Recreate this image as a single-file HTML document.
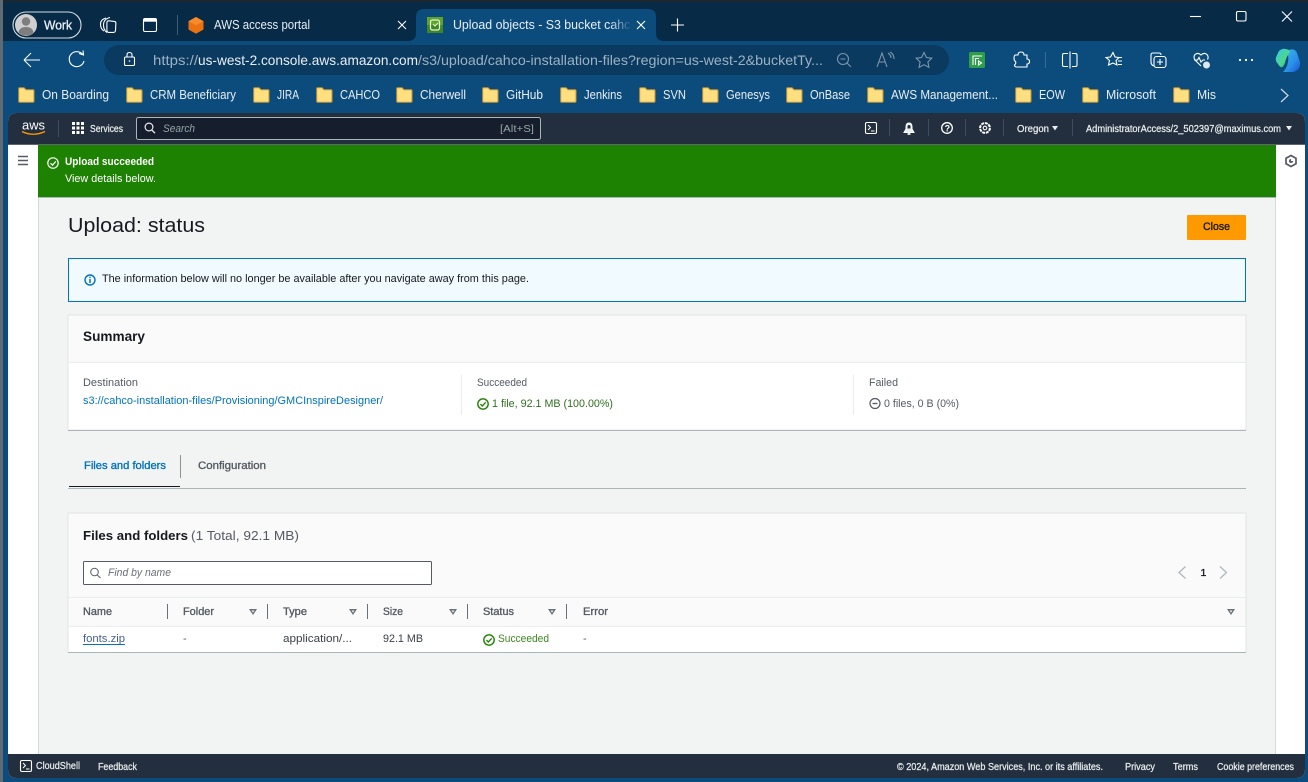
<!DOCTYPE html>
<html><head><meta charset="utf-8"><title>Upload objects - S3 bucket</title>
<style>
html,body{margin:0;padding:0;background:#0c4c7c;width:1308px;height:782px;overflow:hidden}
svg{display:block;font-family:"Liberation Sans",sans-serif}
.c{fill:#e8eef4;font-size:13px}
.nb{fill:#eaeded;font-size:10.5px;stroke:#eaeded;stroke-width:.25px}
.g{fill:#545b64;font-size:11px}
.d{fill:#16191f;font-size:11px}
.b{fill:#16191f;font-size:11px;stroke:#16191f;stroke-width:.35px}
.l{fill:#0073bb;font-size:11px}
.t{fill:#545b64;font-size:11px;stroke:#545b64;stroke-width:.35px}
.s{fill:none;stroke:#fff;stroke-width:1.1}
.h{fill:none;stroke:#545b64;stroke-width:1}
</style></head><body>
<svg width="1308" height="782" viewBox="0 0 1308 782" xmlns="http://www.w3.org/2000/svg">
<defs>
<g id="f"><path d="M0.7 3.5V1.5Q0.7 .7 1.5 .7H6L8 2.7H15Q16 2.7 16 3.7V14.3Q16 15.2 15 15.2H1.6Q.7 15.2 .7 14.3Z" fill="#ffdf80" stroke="#c8962e" stroke-width="1"/></g>
<g id="ck"><circle cx="6" cy="6" r="5.2" fill="none" stroke="#1d8102" stroke-width="1.4"/><path d="M3.4 6.1L5.3 8L8.7 4.3" fill="none" stroke="#1d8102" stroke-width="1.3"/></g>
<g id="tri"><path d="M0 0H8L4 6Z" fill="#687078"/><path d="M2.6 1.5H5.4L4 3.6Z" fill="#fafafa"/></g>
<linearGradient id="fade" x1="0" x2="1" y1="0" y2="0"><stop offset="0" stop-color="#0c4c7c" stop-opacity="0"/><stop offset="1" stop-color="#0c4c7c"/></linearGradient>
<linearGradient id="cp" x1="0" x2="1" y1="0" y2="1"><stop offset="0" stop-color="#3ab8ee"/><stop offset=".6" stop-color="#2a8fe8"/><stop offset="1" stop-color="#1b4fd8"/></linearGradient>
<linearGradient id="cp2" x1="0" x2="1" y1="0" y2="1"><stop offset="0" stop-color="#35c8e8"/><stop offset=".6" stop-color="#4fd68a"/><stop offset="1" stop-color="#1f9aa8"/></linearGradient>
</defs>

<!-- window -->
<rect width="1308" height="782" fill="#0c4c7c"/>
<rect width="1308" height="41" fill="#072a47"/>
<rect width="1308" height="2" fill="#1c2730"/>
<rect x="0" y="0" width="3" height="782" fill="#5f6a72"/>

<!-- tab strip -->
<rect x="13" y="12" width="68" height="26" rx="13" fill="none" stroke="#d5dde3" stroke-width="1.1"/>
<circle cx="26" cy="25" r="11" fill="#cfcfcf"/>
<circle cx="26" cy="21.5" r="4.2" fill="#7e7e7e"/>
<path d="M18.5 32.5Q19.5 27 26 27Q32.5 27 33.5 32.5Q30.5 35.5 26 35.5Q21.5 35.5 18.5 32.5Z" fill="#7e7e7e"/>
<text x="44" y="29.5" class="c" textLength="28" lengthAdjust="spacingAndGlyphs" style="font-size:13px;stroke:#e8eef4;stroke-width:.3px">Work</text>
<g class="s"><path d="M106 18Q100.5 19.5 100.5 24Q100.5 29 104 31"/><path d="M110 17.5Q103.5 19 103.5 25Q103.5 30 107 32.5"/><path d="M109 20.8L114.3 21.4Q116 21.6 115.9 23.3L115.5 30.5Q115.3 32.4 113.4 32.4H108.9Q106.9 32.4 106.9 30.4V23Q106.9 20.6 109 20.8Z"/></g>
<rect x="143.5" y="18.5" width="13" height="13" rx="1.5" class="s"/><rect x="143.5" y="18.5" width="13" height="3.2" fill="#fff"/>
<rect x="177" y="15" width="1" height="20" fill="#3a5b76"/>
<path d="M196 17L203.5 21.2V29.5L196 33.7L188.5 29.5V21.2Z" fill="#ec7211"/><path d="M196 17L203.5 21.2L196 25.3L188.5 21.2Z" fill="#f58b2d"/>
<text x="214" y="29" class="c" textLength="96" lengthAdjust="spacingAndGlyphs">AWS access portal</text>
<path d="M398 21L406 29M406 21L398 29" class="s"/>
<path d="M408 41Q416 41 416 33V17Q416 9 424 9H648Q656 9 656 17V33Q656 41 664 41Z" fill="#0c4c7c"/>
<rect x="427" y="17" width="16" height="16" fill="#3f8624"/><rect x="427" y="17" width="16" height="8" fill="#5ea42c"/>
<rect x="430.5" y="20" width="9" height="10" rx="2" fill="none" stroke="#e5f3da" stroke-width="1.2"/><path d="M433 24L435 26L438 23" fill="none" stroke="#e5f3da"/>
<text x="453" y="29" class="c" textLength="191" lengthAdjust="spacingAndGlyphs">Upload objects - S3 bucket cahco-i</text>
<rect x="610" y="14" width="22" height="22" fill="url(#fade)"/><rect x="630" y="14" width="20" height="22" fill="#0c4c7c"/>
<path d="M637 21L645 29M645 21L637 29" class="s"/>
<path d="M671 25H684M677.5 18.5V31.5" class="s"/>
<!-- window controls -->
<path d="M1190 16.5H1201" class="s"/>
<rect x="1236.5" y="11.5" width="9.5" height="9.5" rx="1.5" class="s"/>
<path d="M1282 11.5L1292 21.5M1292 11.5L1282 21.5" class="s"/>

<!-- toolbar -->
<path d="M24 60H40M24 60L31 53M24 60L31 67" fill="none" stroke="#fff" stroke-width="1"/>
<path d="M83 55A7.5 7.5 0 1 0 84 61M79 53.5L83.5 55L83 50.5" class="s"/>
<rect x="104" y="45" width="845" height="30" rx="15" fill="#0a3a60"/>
<rect x="124.5" y="57" width="10" height="8.5" rx="1.3" class="s"/><path d="M127 57V55Q127 52.5 129.5 52.5Q132 52.5 132 55V57" class="s"/><circle cx="129.5" cy="61" r=".8" fill="#fff"/>
<text y="65" x="153" fill="#9db1c2" style="font-size:14px" textLength="45" lengthAdjust="spacingAndGlyphs">https://</text>
<text y="65" x="198" fill="#e8eef4" style="font-size:14px" textLength="220" lengthAdjust="spacingAndGlyphs">us-west-2.console.aws.amazon.com</text>
<text y="65" x="418" fill="#9db1c2" style="font-size:14px" textLength="405" lengthAdjust="spacingAndGlyphs">/s3/upload/cahco-installation-files?region=us-west-2&amp;bucketTy...</text>
<g fill="none" stroke="#7e96aa" stroke-width="1.1"><circle cx="843" cy="59" r="5.5"/><path d="M847 63L851 67M840.5 59H845.5"/>
<path d="M877 67L882 53L887 67M879 62H885M888 53Q891 55 891 58M890 52Q894 54 894 59"/>
<path d="M924 52.5L926.4 57.5L931.8 58.2L927.9 61.9L928.9 67.3L924 64.7L919.1 67.3L920.1 61.9L916.2 58.2L921.6 57.5Z"/></g>
<rect x="969" y="52" width="16" height="16" rx="1.5" fill="#2e9e4a"/><path d="M973 65V56H982M975.5 65V58.5H979M978.5 61L981.5 63L978.5 65Z" fill="none" stroke="#fff" stroke-width="1.1"/>
<path d="M1015 55H1018Q1018 52 1021 52Q1024 52 1024 55H1027V59Q1029.5 59 1029.5 61.5Q1029.5 64 1027 64V67H1017Q1014.5 67 1014.5 65Q1016.5 63.5 1015.5 61.5Q1014 60.5 1014 58Q1014 56 1015 55Z" class="s"/>
<rect x="1045" y="52" width="1" height="16" fill="#3a6a90"/>
<path d="M1068 53.5H1064Q1062.5 53.5 1062.5 55V65Q1062.5 66.5 1064 66.5H1068M1072 53.5H1075.5Q1077 53.5 1077 55V65Q1077 66.5 1075.5 66.5H1072M1070 51.5V68.5" class="s"/>
<path d="M1113 52.5L1115 57L1119 57.5L1116 60.5L1117 65L1113 63L1108.5 65L1109.5 60.5L1106 57.5L1110.5 57ZM1118 57.5H1122M1118 61H1122M1118 64.5H1122" class="s"/>
<path d="M1154 66Q1151 65 1151 62V55Q1151 53 1153 53H1159Q1161 53 1161 55" class="s"/><rect x="1154" y="56.5" width="12" height="11" rx="2.5" class="s"/><path d="M1160 59V65M1157 62H1163" class="s"/>
<path d="M1201 66L1195 60Q1193 57 1195 54.5Q1198 52 1201 55Q1204 52 1207 54.5Q1209 57 1207.5 59.5M1194 60H1197.5L1199 57.5L1201 62L1203 60H1205" class="s"/><circle cx="1206.5" cy="65" r="3.5" fill="#dfe7ee"/>
<circle cx="1240" cy="60" r="1.1" fill="#fff"/><circle cx="1246" cy="60" r="1.1" fill="#fff"/><circle cx="1252" cy="60" r="1.1" fill="#fff"/>
<path d="M1289 50Q1295 48 1297 53L1300 62Q1301 70 1293 72H1283Q1287 68 1288 62Q1289 57 1287 52Z" fill="url(#cp)"/>
<path d="M1279 51Q1283 47 1289 50L1290 52Q1286 57 1285 63Q1282 71 1278 64Q1274 60 1277 55Z" fill="url(#cp2)"/>

<!-- bookmarks -->
<g>
<use href="#f" x="18" y="87"/><use href="#f" x="126" y="87"/><use href="#f" x="253" y="87"/><use href="#f" x="316" y="87"/><use href="#f" x="396" y="87"/><use href="#f" x="482" y="87"/><use href="#f" x="560" y="87"/><use href="#f" x="639" y="87"/><use href="#f" x="702" y="87"/><use href="#f" x="786" y="87"/><use href="#f" x="867" y="87"/><use href="#f" x="1015" y="87"/><use href="#f" x="1082" y="87"/><use href="#f" x="1173" y="87"/>
<text class="c" y="99" x="42" textLength="67" lengthAdjust="spacingAndGlyphs">On Boarding</text>
<text class="c" y="99" x="150" textLength="86" lengthAdjust="spacingAndGlyphs">CRM Beneficiary</text>
<text class="c" y="99" x="277" textLength="22" lengthAdjust="spacingAndGlyphs">JIRA</text>
<text class="c" y="99" x="340" textLength="40" lengthAdjust="spacingAndGlyphs">CAHCO</text>
<text class="c" y="99" x="420" textLength="46" lengthAdjust="spacingAndGlyphs">Cherwell</text>
<text class="c" y="99" x="506" textLength="37" lengthAdjust="spacingAndGlyphs">GitHub</text>
<text class="c" y="99" x="584" textLength="38" lengthAdjust="spacingAndGlyphs">Jenkins</text>
<text class="c" y="99" x="663" textLength="23" lengthAdjust="spacingAndGlyphs">SVN</text>
<text class="c" y="99" x="726" textLength="44" lengthAdjust="spacingAndGlyphs">Genesys</text>
<text class="c" y="99" x="810" textLength="40" lengthAdjust="spacingAndGlyphs">OnBase</text>
<text class="c" y="99" x="891" textLength="107" lengthAdjust="spacingAndGlyphs">AWS Management...</text>
<text class="c" y="99" x="1039" textLength="26" lengthAdjust="spacingAndGlyphs">EOW</text>
<text class="c" y="99" x="1106" textLength="50" lengthAdjust="spacingAndGlyphs">Microsoft</text>
<text class="c" y="99" x="1197" textLength="19" lengthAdjust="spacingAndGlyphs">Mis</text>
<path d="M1281 89L1288 95.5L1281 102" fill="none" stroke="#cfd9e2" stroke-width="1.2"/>
</g>

<!-- page -->
<path d="M8 122Q8 113 17 113H1296Q1305 113 1305 122V769Q1305 778 1296 778H17Q8 778 8 769Z" fill="#fff"/>
<!-- aws nav -->
<path d="M8 144V122Q8 113 17 113H1296Q1305 113 1305 122V144Z" fill="#232f3e"/>
<rect x="8" y="144" width="1297" height="1" fill="#5b6673"/>
<text x="22" y="129.5" fill="#fff" style="font-size:12.5px" textLength="23" lengthAdjust="spacingAndGlyphs">aws</text>
<path d="M22 131.5Q33 137 45 131.5" fill="none" stroke="#f90" stroke-width="1.3"/>
<rect x="58" y="120" width="1" height="17" fill="#414d5c"/>
<g fill="#fff"><rect x="72" y="122" width="3" height="3"/><rect x="76.5" y="122" width="3" height="3"/><rect x="81" y="122" width="3" height="3"/><rect x="72" y="126.5" width="3" height="3"/><rect x="76.5" y="126.5" width="3" height="3"/><rect x="81" y="126.5" width="3" height="3"/><rect x="72" y="131" width="3" height="3"/><rect x="76.5" y="131" width="3" height="3"/><rect x="81" y="131" width="3" height="3"/></g>
<text x="90" y="132" class="nb" textLength="33" lengthAdjust="spacingAndGlyphs">Services</text>
<rect x="136.5" y="117.5" width="404" height="22" rx="2" fill="#161e2d" stroke="#aab7b8"/>
<circle cx="149" cy="127" r="3.9" fill="none" stroke="#eaeded" stroke-width="1.2"/><path d="M151.8 130L155 133.2" stroke="#eaeded" stroke-width="1.3"/>
<text x="163" y="132" fill="#95a5a6" style="font-size:11px;font-style:italic" textLength="32" lengthAdjust="spacingAndGlyphs">Search</text>
<text x="500" y="132" fill="#95a5a6" style="font-size:10.5px" textLength="34" lengthAdjust="spacingAndGlyphs">[Alt+S]</text>
<rect x="865.5" y="122.5" width="11" height="11" rx="1.5" fill="none" stroke="#fff" stroke-width="1.1"/><path d="M868 125L870.5 127.5L868 130M871 131H874.5" fill="none" stroke="#fff"/>
<rect x="889" y="119" width="1" height="17" fill="#414d5c"/>
<path d="M904 132.5H914L912 129V127Q912 123 909 123Q906 123 906 127V129Z" fill="#eaeded" stroke="#fff" stroke-width="1"/><path d="M907.5 134H910.5" stroke="#fff" stroke-width="1.6"/><path d="M907.5 128.5H910.5V126.5Q910.5 125 909 125Q907.5 125 907.5 126.5Z" fill="#232f3e"/>
<rect x="928" y="119" width="1" height="17" fill="#414d5c"/>
<circle cx="947" cy="128" r="5.3" fill="none" stroke="#fff" stroke-width="1.3"/><text x="944.6" y="131.5" fill="#fff" style="font-size:9px;font-weight:bold">?</text>
<rect x="965" y="119" width="1" height="17" fill="#414d5c"/>
<circle cx="985" cy="128" r="4.9" fill="none" stroke="#fff" stroke-width="2" stroke-dasharray="3 .8"/><circle cx="985" cy="128" r="1.8" fill="none" stroke="#fff" stroke-width="1.1"/>
<rect x="1003" y="119" width="1" height="17" fill="#414d5c"/>
<text x="1017" y="132" class="nb" textLength="32" lengthAdjust="spacingAndGlyphs">Oregon</text><path d="M1052 126H1058L1055 130.5Z" fill="#eaeded"/>
<rect x="1072" y="119" width="1" height="17" fill="#414d5c"/>
<text x="1086" y="132" class="nb" textLength="195" lengthAdjust="spacingAndGlyphs">AdministratorAccess/2_502397@maximus.com</text><path d="M1286 126H1292L1289 130.5Z" fill="#eaeded"/>

<!-- sidebars -->
<path d="M18 156.5H28M18 160.5H28M18 164.5H28" stroke="#545b64" stroke-width="1.6"/>
<path d="M1291 155.5L1296 158.3V163.7L1291 166.5L1286 163.7V158.3Z" fill="none" stroke="#545b64" stroke-width="1.7"/><path d="M1291 159A2 2 0 1 0 1293 161H1291Z" fill="#545b64"/>
<rect x="38" y="197" width="1238" height="557" fill="#f2f3f3"/>
<rect x="38" y="145" width="1" height="609" fill="#d5dbdb"/>
<rect x="1275" y="197" width="1" height="557" fill="#d5dbdb"/>

<!-- banner -->
<rect x="38" y="145" width="1238" height="52" fill="#1d8102"/>
<rect x="38" y="197" width="1238" height="1" fill="#aab7b8"/>
<circle cx="53" cy="163" r="5.2" fill="none" stroke="#fff" stroke-width="1.2"/><path d="M50.5 163.2L52.5 165.2L55.8 161.4" fill="none" stroke="#fff" stroke-width="1.2"/>
<text x="65" y="165" fill="#fff" style="font-size:11px;font-weight:bold" textLength="89" lengthAdjust="spacingAndGlyphs">Upload succeeded</text>
<text x="65" y="182" fill="#fff" style="font-size:11px" textLength="91" lengthAdjust="spacingAndGlyphs">View details below.</text>

<!-- heading -->
<text x="68" y="232" fill="#16191f" style="font-size:20px" textLength="137" lengthAdjust="spacingAndGlyphs">Upload: status</text>
<rect x="1187" y="215" width="59" height="25" rx="1" fill="#ff9900"/>
<text x="1203" y="230" class="b" textLength="27" lengthAdjust="spacingAndGlyphs">Close</text>

<!-- info -->
<rect x="68.5" y="258.5" width="1177" height="43" fill="#f1faff" stroke="#0073bb"/>
<circle cx="90" cy="280" r="5" fill="none" stroke="#0073bb" stroke-width="1.4"/><path d="M90 279V283M90 276.8V278" stroke="#0073bb" stroke-width="1.5"/>
<text x="102" y="282" class="d" textLength="427" lengthAdjust="spacingAndGlyphs">The information below will no longer be available after you navigate away from this page.</text>

<!-- summary -->
<rect x="68" y="315" width="1178" height="115" fill="#fff" stroke="#e3e6e6"/>
<rect x="68.5" y="315.5" width="1177" height="47" fill="#fafafa"/>
<rect x="68" y="362" width="1178" height="1" fill="#eaeded"/>
<rect x="68" y="430" width="1178" height="1" fill="#aab7b8"/>
<text x="83" y="341" fill="#16191f" style="font-size:14px;font-weight:bold" textLength="62" lengthAdjust="spacingAndGlyphs">Summary</text>
<text x="83" y="386" class="g" textLength="55" lengthAdjust="spacingAndGlyphs">Destination</text>
<text x="83" y="404" class="l" textLength="300" lengthAdjust="spacingAndGlyphs">s3://cahco-installation-files/Provisioning/GMCInspireDesigner/</text>
<rect x="461" y="375" width="1" height="40" fill="#eaeded"/>
<text x="477" y="386" class="g" textLength="50" lengthAdjust="spacingAndGlyphs">Succeeded</text>
<use href="#ck" x="477" y="398"/>
<text x="492" y="407" fill="#2f6f1f" style="font-size:11px" textLength="121" lengthAdjust="spacingAndGlyphs">1 file, 92.1 MB (100.00%)</text>
<rect x="853" y="375" width="1" height="40" fill="#eaeded"/>
<text x="869" y="386" class="g" textLength="29" lengthAdjust="spacingAndGlyphs">Failed</text>
<circle cx="875" cy="403.5" r="5" fill="none" stroke="#545b64" stroke-width="1.2"/><path d="M872.5 403.5H877.5" stroke="#545b64" stroke-width="1.3"/>
<text x="884" y="407" class="g" textLength="75" lengthAdjust="spacingAndGlyphs">0 files, 0 B (0%)</text>

<!-- tabs -->
<text x="84" y="469" fill="#0073bb" style="font-size:11px;stroke:#0073bb;stroke-width:.35px" textLength="82" lengthAdjust="spacingAndGlyphs">Files and folders</text>
<rect x="180" y="455" width="1" height="23" fill="#879596"/>
<text x="198" y="469" class="t" textLength="68" lengthAdjust="spacingAndGlyphs">Configuration</text>
<rect x="68" y="488" width="1178" height="1" fill="#aab7b8"/>
<rect x="69" y="486" width="111" height="1" fill="#16191f"/>

<!-- files card -->
<rect x="68" y="513" width="1178" height="139" fill="#fafafa" stroke="#e3e6e6"/>
<rect x="68" y="652" width="1178" height="1" fill="#aab7b8"/>
<text x="83" y="540" fill="#16191f" style="font-size:13px;font-weight:bold" textLength="105" lengthAdjust="spacingAndGlyphs">Files and folders</text>
<text x="191" y="540" fill="#545b64" style="font-size:13px" textLength="108" lengthAdjust="spacingAndGlyphs">(1 Total, 92.1 MB)</text>
<rect x="83.5" y="561.5" width="348" height="23" rx="1" fill="#fff" stroke="#545b64"/>
<circle cx="94.5" cy="572" r="3.8" class="h" stroke-width="1.2"/><path d="M97.3 575L100.5 578" class="h" stroke-width="1.3"/>
<text x="108" y="576" fill="#687078" style="font-size:11px;font-style:italic" textLength="63" lengthAdjust="spacingAndGlyphs">Find by name</text>
<path d="M1185.5 566.5L1179 572.5L1185.5 578.5M1220 566.5L1226.5 572.5L1220 578.5" fill="none" stroke="#aab7b8" stroke-width="1.2"/>
<text x="1200.5" y="576" class="b" style="font-size:10.5px">1</text>

<rect x="68" y="597" width="1178" height="1" fill="#eaeded"/>
<rect x="68.5" y="627" width="1177" height="25" fill="#fff"/>
<rect x="68" y="626" width="1178" height="1" fill="#eaeded"/>
<text x="83" y="615" class="t" textLength="29" lengthAdjust="spacingAndGlyphs">Name</text>
<text x="183" y="615" class="t" textLength="31" lengthAdjust="spacingAndGlyphs">Folder</text>
<text x="283" y="615" class="t" textLength="24" lengthAdjust="spacingAndGlyphs">Type</text>
<text x="383" y="615" class="t" textLength="20" lengthAdjust="spacingAndGlyphs">Size</text>
<text x="483" y="615" class="t" textLength="31" lengthAdjust="spacingAndGlyphs">Status</text>
<text x="583" y="615" class="t" textLength="25" lengthAdjust="spacingAndGlyphs">Error</text>
<g fill="#687078"><rect x="167" y="604" width="1" height="15"/><rect x="267" y="604" width="1" height="15"/><rect x="367" y="604" width="1" height="15"/><rect x="467" y="604" width="1" height="15"/><rect x="566" y="604" width="1" height="15"/></g>
<use href="#tri" x="249" y="609"/><use href="#tri" x="349" y="609"/><use href="#tri" x="449" y="609"/><use href="#tri" x="548" y="609"/><use href="#tri" x="1227" y="609"/>
<text x="83" y="642" class="l" style="fill:#44608f" textLength="42" lengthAdjust="spacingAndGlyphs">fonts.zip</text>
<rect x="83" y="644" width="42" height="1" fill="#0073bb"/>
<text x="183" y="642" class="g">-</text>
<text x="283" y="642" class="d" style="fill:#3a4048" textLength="69" lengthAdjust="spacingAndGlyphs">application/...</text>
<text x="383" y="642" class="d" style="fill:#3a4048" textLength="40" lengthAdjust="spacingAndGlyphs">92.1 MB</text>
<use href="#ck" x="483" y="634"/>
<text x="498" y="642" fill="#3f8624" style="font-size:11px" textLength="51" lengthAdjust="spacingAndGlyphs">Succeeded</text>
<text x="583" y="642" class="g">-</text>

<!-- footer -->
<path d="M8 754H1305V769Q1305 778 1296 778H17Q8 778 8 769Z" fill="#232f3e"/>
<rect x="20.5" y="760.5" width="11" height="11" rx="1.5" fill="none" stroke="#fff" stroke-width="1.1"/><path d="M23 763L25.5 765.5L23 768M26 769H29.5" fill="none" stroke="#fff"/>
<text x="36" y="769" class="nb" textLength="44" lengthAdjust="spacingAndGlyphs">CloudShell</text>
<text x="98" y="770" class="nb" textLength="39" lengthAdjust="spacingAndGlyphs">Feedback</text>
<text x="897" y="770" class="nb" textLength="206" lengthAdjust="spacingAndGlyphs">© 2024, Amazon Web Services, Inc. or its affiliates.</text>
<text x="1125" y="770" class="nb" textLength="30" lengthAdjust="spacingAndGlyphs">Privacy</text>
<text x="1173" y="770" class="nb" textLength="25" lengthAdjust="spacingAndGlyphs">Terms</text>
<text x="1217" y="770" class="nb" textLength="77" lengthAdjust="spacingAndGlyphs">Cookie preferences</text>
</svg>
</body></html>
